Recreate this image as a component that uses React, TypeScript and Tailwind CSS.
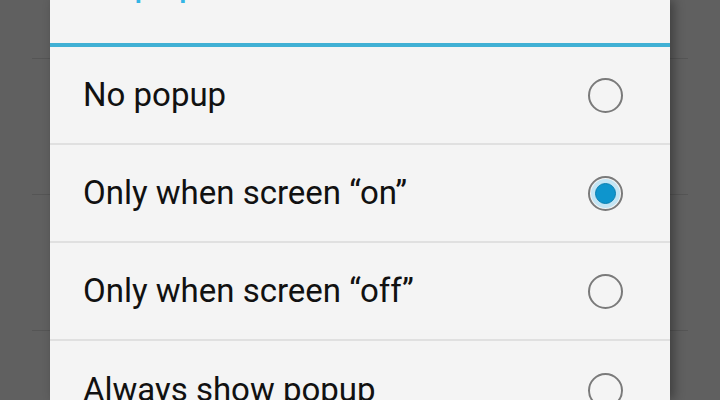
import React from 'react';

const options = [
  { label: 'No popup', checked: false },
  { label: 'Only when screen \u201Con\u201D', checked: true },
  { label: 'Only when screen \u201Coff\u201D', checked: false },
  { label: 'Always show popup', checked: false },
];

const Radio: React.FC<{ checked: boolean }> = ({ checked }) => (
  <div className="w-[35px] h-[35px] rounded-full border-2 border-[#7a7a7a] flex items-center justify-center">
    {checked && (
      <div className="w-[29px] h-[29px] rounded-full bg-[#c3e5f4] flex items-center justify-center">
        <div className="w-[21px] h-[21px] rounded-full bg-[#0e95cd] border border-[#0a7fb0]" />
      </div>
    )}
  </div>
);

const App: React.FC = () => {
  return (
    <div className="w-[720px] h-[400px] overflow-hidden bg-[#606060] flex font-['Roboto',sans-serif]">
      {/* dimmed list behind the dialog */}
      <div className="w-[50px] shrink-0 flex flex-col">
        <div className="h-[59px] shrink-0 border-b border-[#555555] ml-[32px]" />
        <div className="h-[136px] shrink-0 border-b border-[#555555] ml-[32px]" />
        <div className="h-[136px] shrink-0 border-b border-[#555555] ml-[32px]" />
      </div>

      {/* dialog */}
      <div className="w-[620px] shrink-0 bg-[#f4f4f4] flex flex-col shadow-[4px_0_10px_rgba(0,0,0,0.35)] z-10">
        <div className="h-[43px] shrink-0 overflow-hidden flex items-end pl-[36px]">
          <div className="text-[40px] leading-[48px] mb-[37px] text-[#33b5e5] whitespace-nowrap">
            Popup notification
          </div>
        </div>
        <div className="h-[4px] shrink-0 bg-[#40b0d4]" />
        {options.map((o, i) => (
          <div
            key={i}
            className={`h-[98px] shrink-0 flex items-center justify-between pl-[33px] pr-[47px] ${
              i < options.length - 1 ? 'border-b-2 border-[#e0e0e0]' : ''
            }`}
          >
            <span className="text-[33px] text-[#111111]">{o.label}</span>
            <Radio checked={o.checked} />
          </div>
        ))}
      </div>

      <div className="flex-1 flex flex-col">
        <div className="h-[59px] shrink-0 border-b border-[#555555] mr-[32px]" />
        <div className="h-[136px] shrink-0 border-b border-[#555555] mr-[32px]" />
        <div className="h-[136px] shrink-0 border-b border-[#555555] mr-[32px]" />
      </div>
    </div>
  );
};

export default App;
